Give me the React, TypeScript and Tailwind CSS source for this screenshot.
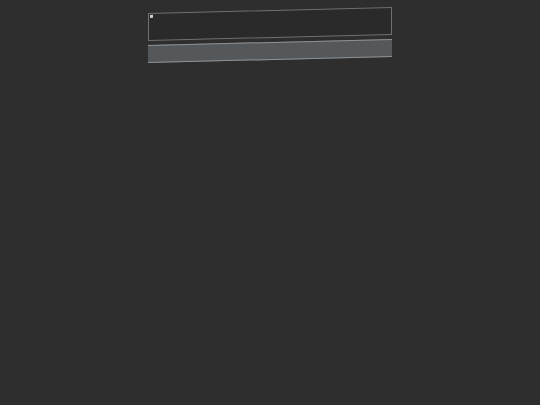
import React from "react";

export default function App() {
  return (
    <div className="min-h-screen w-full bg-[#2e2e2e] pt-[10px]" style={{ fontFamily: '"Liberation Sans", sans-serif' }}>
      <div className="mx-auto flex w-[244px] flex-col gap-[4px] skew-y-[-1.4deg]">
        <div className="relative h-[28px] border border-[#707070] bg-[#2a2a2a]">
          <div className="absolute left-[1px] top-[1px] h-[3px] w-[3px] bg-[#c9d3c6]" />
        </div>
        <div className="h-[18px] border-y border-[#8d9194] bg-[#55585a]" />
      </div>
    </div>
  );
}
